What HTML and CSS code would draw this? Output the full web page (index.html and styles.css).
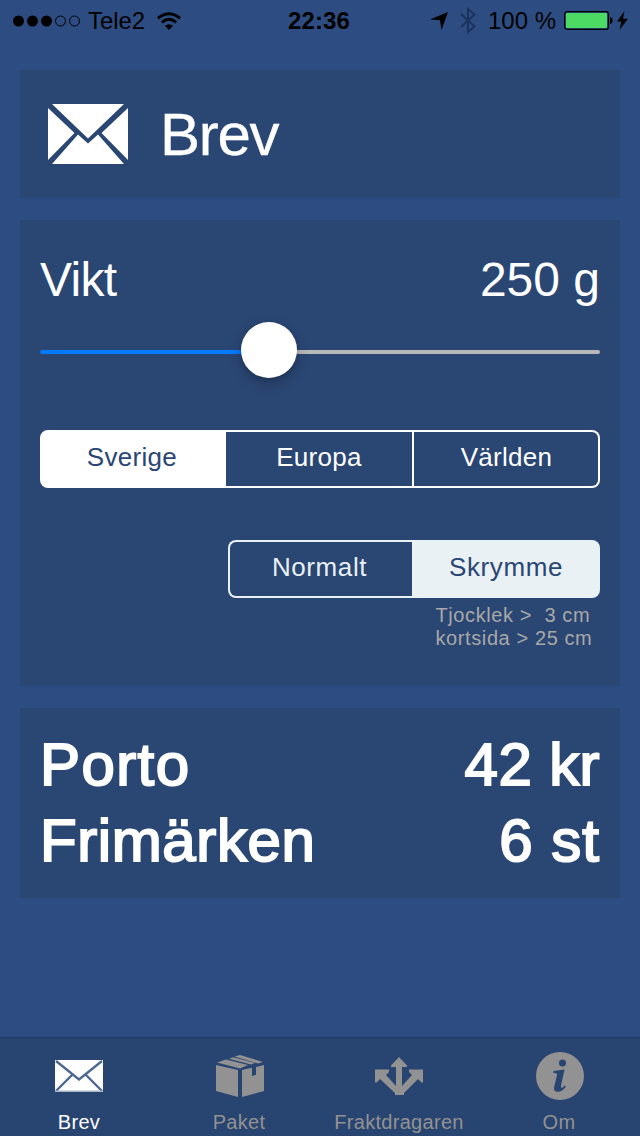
FILE: index.html
```html
<!DOCTYPE html>
<html lang="sv">
<head>
<meta charset="utf-8">
<title>Brev</title>
<link rel="stylesheet" href="styles.css">
</head>
<body>
<div class="app">
  <header class="status">
    <div class="status-left">
      <svg class="dots" width="68" height="12" viewBox="0 0 68 12"><circle cx="5.500" cy="6" r="5.500"/><circle cx="19.500" cy="6" r="5.500"/><circle cx="33.500" cy="6" r="5.500"/><g fill="none" stroke="#000"><circle cx="47.500" cy="6" r="5"/><circle cx="61.500" cy="6" r="5"/></g></svg>
      <span class="carrier">Tele2</span>
      <svg class="wifi" width="24" height="18" viewBox="0 0 24 18"><path d="M12 18l-4.100-4.200Q12 10.500 16.100 13.800z"/><g fill="none" stroke="#000" stroke-width="3"><path d="M1 6.300Q12-2.800 23 6.300"/><path d="M4.800 10.300Q12 4.200 19.200 10.300"/></g></svg>
    </div>
    <div class="clock">22:36</div>
    <div class="status-right">
      <svg class="location" width="18" height="18" viewBox="0 0 18 18"><path d="M18 0L11.500 18 10 8.300 0 7.500z"/></svg>
      <svg class="bluetooth" width="16" height="27" viewBox="0 0 16 27"><path d="M1 7l13.500 12.500L8 25V2l6.500 5.500L1 20" fill="none" stroke="#1c325c" stroke-width="2"/></svg>
      <span class="percent">100 %</span>
      <svg class="battery" width="49" height="19" viewBox="0 0 49 19"><rect x=".6" y=".6" width="43.800" height="17.800" rx="2.500" fill="none" stroke="#000" stroke-width="1.200"/><rect x="2" y="2" width="41" height="15" rx="1" fill="#4cd964"/><path d="M46 6c3.500.5 3.500 6.500 0 7z"/></svg>
      <svg class="bolt" width="11" height="19" viewBox="0 0 11 19"><path d="M7.500 0L0 10.500h4.300L2.500 19 11 7.800H6z"/></svg>
    </div>
  </header>

  <main class="content">
    <section class="card title-card">
      <svg width="80" height="60" viewBox="0 0 80 60" fill="#fff"><path d="M4 0h72L40 34.500z"/><path d="M0 4l26.500 25L0 56zM80 4v52L53.500 29z"/><path d="M30 30.500l10 9 10-9L76 60H4z"/></svg>
      <h1>Brev</h1>
    </section>

    <section class="card options">
      <div class="row weight"><span class="weight-label">Vikt</span><span>250 g</span></div>
      <div class="slider"><div class="fill"></div><div class="knob"></div><div class="rest"></div></div>
      <div class="segments region"><div class="segment selected">Sverige</div><div class="segment">Europa</div><div class="segment world">Världen</div></div>
      <div class="segments format"><div class="segment normal">Normalt</div><div class="segment selected">Skrymme</div></div>
      <p class="hint">Tjocklek &gt;&nbsp; 3 cm<br>kortsida &gt; 25 cm</p>
    </section>

    <section class="card result">
      <div class="row"><span class="porto">Porto</span><span class="price">42 kr</span></div>
      <div class="row"><span class="stamps">Frimärken</span><span class="count">6 st</span></div>
    </section>
  </main>

  <nav class="tabs">
    <div class="tab active">
      <svg viewBox="0 0 48 48"><path d="M0 8h48v32H0z"/><path d="M1 9l23 18.500L47 9M1 39l16-16M47 39L31 23" fill="none" stroke="#4d6890" stroke-width="2.400"/><path d="M0 38.500h48V40H0z" fill="#a9b6c9"/></svg>
      <span>Brev</span>
    </div>
    <div class="tab">
      <svg class="shifted" viewBox="0 0 48 48"><path d="M0 13l22 5v27L0 39zM26 18l10-2.200V24l4-1.200V15l8-2v26l-22 6z"/><path d="M1 10.500L10 7.500 32 13l-8 3.500zM13 6.700l4-1.500L39 11l-4 1.500zM18.500 4.500L24 3l23 7-5 1.500z"/></svg>
      <span>Paket</span>
    </div>
    <div class="tab">
      <svg viewBox="0 0 48 48"><path d="M24 5l8 8.500v1.500h-5v19L37 23l-3-3v-2.500h14V30.500h-1.500L43 27 29 41v2h-9v-2L5 27 1.500 30.500H0V17.500h14V20l-3 3 10 11V15h-5v-1.500z"/></svg>
      <span>Fraktdragaren</span>
    </div>
    <div class="tab">
      <svg class="shifted" viewBox="0 0 48 48"><circle cx="24" cy="24" r="24"/><g fill="#284471"><circle cx="26.500" cy="11" r="3.500"/><path d="M17.500 19l11-1.500L25 33.500q-.4 2.500.8 2.300 1.400-.2 2.800-2.400l1.300 1q-3.600 5.400-8 5.400-4.600-.2-3.800-4.600L21 23q.5-2.300-3.500-2z"/></g></svg>
      <span>Om</span>
    </div>
  </nav>
</div>
</body>
</html>
```
FILE: styles.css
```css
* { box-sizing: border-box; }
body { margin: 0; font-family: "Liberation Sans", Arial, sans-serif; }
svg { display: block; flex: none; }
.app { width: 640px; height: 1136px; display: flex; flex-direction: column; background: #2d4d82; overflow: hidden; color: #fff; }

.status { height: 40px; display: grid; grid-template-columns: 1fr auto 1fr; color: #000; font-size: 24px; line-height: 41px; white-space: nowrap; }
.status-left { display: flex; align-items: center; padding-left: 13px; }
.carrier { margin-left: 7px; letter-spacing: -.1px; }
.wifi { margin-left: 12px; }
.clock { font-weight: bold; letter-spacing: .1px; padding-right: 2px; }
.status-right { display: flex; align-items: center; justify-content: flex-end; padding-right: 12px; }
.bluetooth { margin-left: 12px; }
.percent { margin-left: 12px; }
.battery { margin-left: 8px; }
.bolt { margin-left: 4px; }

.content { flex: 1; display: flex; flex-direction: column; gap: 22px; padding: 30px 20px 0; }
.card { background: #2a4673; }
.title-card { height: 128px; display: flex; align-items: center; padding-left: 28px; }
h1 { margin: 2px 0 0 32px; font-size: 60px; font-weight: normal; line-height: 72px; letter-spacing: -1.300px; -webkit-text-stroke: .3px #fff; }

.row { display: flex; justify-content: space-between; white-space: pre; }
.options { height: 466px; padding: 30px 20px 0; display: flex; flex-direction: column; }
.weight { font-size: 48px; line-height: 59px; }
.weight-label { letter-spacing: -.7px; }
.slider { height: 56px; margin-top: 13px; display: flex; align-items: center; }
.fill { width: 205px; height: 4px; margin-top: 4px; margin-right: -4px; border-radius: 2px; background: #007aff; }
.knob { width: 56px; height: 56px; border-radius: 50%; background: #fff; z-index: 1; box-shadow: 0 5px 14px rgba(0,0,0,.22), 0 2px 4px rgba(0,0,0,.12); }
.rest { flex: 1; height: 4px; margin-top: 4px; margin-left: -4px; border-radius: 2px; background: #b7b7b7; }
.segments { height: 58px; display: grid; font-size: 26px; line-height: 50px; text-align: center; letter-spacing: .3px; }
.region { margin-top: 52px; grid-template-columns: 186px 188px 186px; }
.format { margin-top: 52px; width: 372px; align-self: flex-end; grid-template-columns: 184px 188px; color: #e9f1f5; letter-spacing: .6px; }
.segment { border: 2px solid; border-left-width: 0; }
.segment:first-child { border-left-width: 2px; border-radius: 8px 0 0 8px; }
.segment:last-child { border-radius: 0 8px 8px 0; }
.segment.normal { border-right: 0; padding-right: 3px; }
.segment.selected { color: #2a4673; background: #fff; border-color: #fff; }
.segment.world { padding-left: 1px; }
.region .selected { padding-right: 2px; }
.format .selected { background: #e9f1f5; border-color: #e9f1f5; padding-left: 2px; }
.hint { margin: 6px 0 0 395.500px; font-size: 20px; line-height: 23px; letter-spacing: .6px; color: #a8a8a8; white-space: nowrap; }

.result { height: 190px; padding: 19px 20px 0; font-size: 60px; line-height: 76px; -webkit-text-stroke: 2px #fff; }
.porto { letter-spacing: 1.400px; }
.stamps { letter-spacing: .6px; }
.price { letter-spacing: .4px; }
.count { letter-spacing: 1px; }

.tabs { height: 99px; display: grid; grid-template-columns: repeat(4, 160px); margin-left: -1px; border-top: 1px solid #213a64; background: #284471; width: 641px; font-size: 20px; color: #929292; letter-spacing: .3px; }
.tab { display: flex; flex-direction: column; align-items: center; padding-top: 14px; }
.tab svg { width: 48px; height: 48px; fill: currentColor; }
.tab .shifted { margin-left: 2px; }
.tab span { margin-top: 11px; line-height: 23px; }
.active { color: #fff; }
```
